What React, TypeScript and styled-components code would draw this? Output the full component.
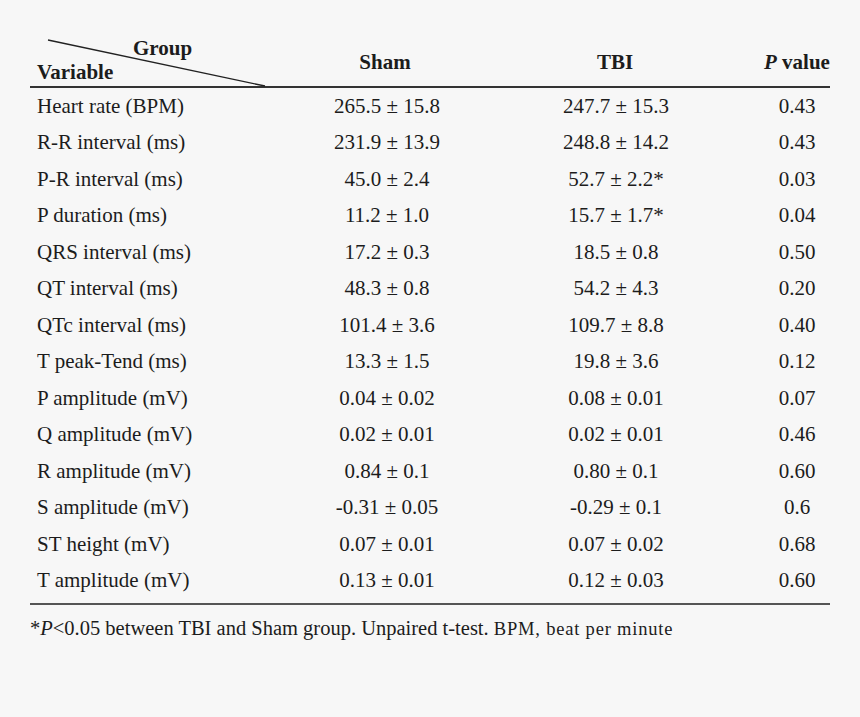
import React from "react";
import styled, { createGlobalStyle } from "styled-components";

const GlobalStyle = createGlobalStyle`
  html, body {
    margin: 0;
    padding: 0;
    background: #f7f7f7;
  }
  body {
    font-family: "Liberation Serif", "Times New Roman", serif;
    color: #1c1c1c;
  }
`;

const Page = styled.div`
  width: 860px;
  height: 717px;
  padding: 35px 30px 0;
  box-sizing: border-box;
`;

const Table = styled.div`
  width: 800px;
  display: grid;
  grid-template-columns: 240px 230px 230px 100px;
  padding-bottom: 4px;
  border-bottom: 2px solid #555;
`;

const HeadCell = styled.div<{ $pad?: number }>`
  height: 53px;
  box-sizing: border-box;
  padding-top: 4px;
  border-bottom: 2px solid #333;
  display: flex;
  align-items: center;
  justify-content: center;
  font-weight: bold;
  font-size: 21px;
  padding-left: ${(p) => p.$pad || 0}px;
`;

const CornerCell = styled.div`
  position: relative;
  height: 53px;
  box-sizing: border-box;
  border-bottom: 2px solid #333;
  font-weight: bold;
  font-size: 21px;
`;

const Diagonal = styled.svg`
  position: absolute;
  left: 0;
  top: 0;
  width: 240px;
  height: 53px;
  overflow: visible;
`;

const GroupLabel = styled.span`
  position: absolute;
  left: 103px;
  top: 1px;
`;

const VariableLabel = styled.span`
  position: absolute;
  left: 7px;
  top: 25px;
`;

const Cell = styled.div<{ $first?: boolean; $pad?: number }>`
  height: 36.5px;
  display: flex;
  align-items: center;
  justify-content: ${(p) => (p.$first ? "flex-start" : "center")};
  padding-left: ${(p) => (p.$first ? 7 : p.$pad || 0)}px;
  font-size: 21px;
  white-space: nowrap;
`;

const Footnote = styled.p`
  margin: 12px 0 0;
  font-size: 20.5px;
  white-space: nowrap;
`;

const Small = styled.span`
  font-size: 18.5px;
  letter-spacing: 0.8px;
`;

type Row = [string, string, string, string];

const rows: Row[] = [
  ["Heart rate (BPM)", "265.5 ± 15.8", "247.7 ± 15.3", "0.43"],
  ["R-R interval (ms)", "231.9 ± 13.9", "248.8 ± 14.2", "0.43"],
  ["P-R interval (ms)", "45.0 ± 2.4", "52.7 ± 2.2*", "0.03"],
  ["P duration (ms)", "11.2 ± 1.0", "15.7 ± 1.7*", "0.04"],
  ["QRS interval (ms)", "17.2 ± 0.3", "18.5 ± 0.8", "0.50"],
  ["QT interval (ms)", "48.3 ± 0.8", "54.2 ± 4.3", "0.20"],
  ["QTc interval (ms)", "101.4 ± 3.6", "109.7 ± 8.8", "0.40"],
  ["T peak-Tend (ms)", "13.3 ± 1.5", "19.8 ± 3.6", "0.12"],
  ["P amplitude (mV)", "0.04 ± 0.02", "0.08 ± 0.01", "0.07"],
  ["Q amplitude (mV)", "0.02 ± 0.01", "0.02 ± 0.01", "0.46"],
  ["R amplitude (mV)", "0.84 ± 0.1", "0.80 ± 0.1", "0.60"],
  ["S amplitude (mV)", "-0.31 ± 0.05", "-0.29 ± 0.1", "0.6"],
  ["ST height (mV)", "0.07 ± 0.01", "0.07 ± 0.02", "0.68"],
  ["T amplitude (mV)", "0.13 ± 0.01", "0.12 ± 0.03", "0.60"],
];

export default function App() {
  return (
    <>
      <GlobalStyle />
      <Page>
        <Table>
          <CornerCell>
            <Diagonal viewBox="0 0 240 53">
              <line x1="18" y1="5" x2="235" y2="51" stroke="#222" strokeWidth="1.4" />
            </Diagonal>
            <GroupLabel>Group</GroupLabel>
            <VariableLabel>Variable</VariableLabel>
          </CornerCell>
          <HeadCell>Sham</HeadCell>
          <HeadCell>TBI</HeadCell>
          <HeadCell $pad={34}>
            <i>P</i>&nbsp;value
          </HeadCell>
          {rows.map((r) => (
            <React.Fragment key={r[0]}>
              <Cell $first>{r[0]}</Cell>
              <Cell $pad={4}>{r[1]}</Cell>
              <Cell $pad={2}>{r[2]}</Cell>
              <Cell $pad={34}>{r[3]}</Cell>
            </React.Fragment>
          ))}
        </Table>
        <Footnote>
          *<i>P</i>&lt;0.05 between TBI and Sham group. Unpaired t-test.{" "}
          <Small>BPM, beat per minute</Small>
        </Footnote>
      </Page>
    </>
  );
}
